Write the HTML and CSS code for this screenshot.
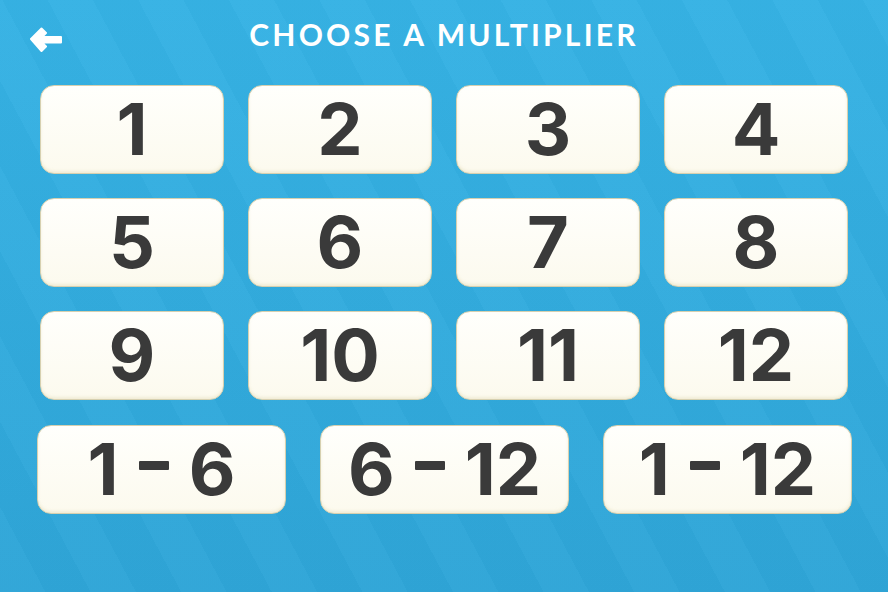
FILE: index.html
```html
<!DOCTYPE html>
<html lang="en">
<head>
    <meta charset="UTF-8">
    <meta name="viewport" content="width=device-width, initial-scale=1.0">
    <title>Choose a Multiplier</title>
    <link rel="stylesheet" href="styles.css">
</head>
<body>

<div class="screen">
    <div class="header">
        <button class="back" aria-label="Back">
            <svg width="34" height="26" viewBox="0 0 34 26">
                <path d="M2 13 L12.5 2.5 L17 7 L13 11 H32 V16.5 H13 L17 20.5 L12.5 25 Z" fill="#fff" stroke="#fff" stroke-width="2" stroke-linejoin="round"/>
            </svg>
        </button>
        <h1 class="title">CHOOSE A MULTIPLIER</h1>
    </div>

    <!-- single tables -->
    <div class="tables">
        <button class="card">1</button>
        <button class="card">2</button>
        <button class="card">3</button>
        <button class="card">4</button>
        <button class="card">5</button>
        <button class="card">6</button>
        <button class="card">7</button>
        <button class="card">8</button>
        <button class="card">9</button>
        <button class="card">10</button>
        <button class="card">11</button>
        <button class="card">12</button>
    </div>

    <!-- mixed ranges -->
    <div class="ranges">
        <button class="card">1<span class="dash" aria-label="to"></span>6</button>
        <button class="card">6<span class="dash" aria-label="to"></span>12</button>
        <button class="card">1<span class="dash" aria-label="to"></span>12</button>
    </div>
</div>

</body>
</html>
```

FILE: styles.css
```css
* {
    box-sizing: border-box;
}
html, body {
    margin: 0;
    height: 100%;
}
body {
    font-family: Inter, "Liberation Sans", sans-serif;
    background-color: #33ade0;
    background-image:
        repeating-linear-gradient(62deg, rgba(255, 255, 255, 0.02) 0 40px, rgba(0, 0, 0, 0.012) 40px 80px),
        linear-gradient(180deg, #36b2e4 0%, #2fa5d7 100%);
    overflow: hidden;
}
.screen {
    width: 888px;
    height: 592px;
}
.header {
    position: relative;
    height: 85px;
    display: flex;
    justify-content: center;
    padding-top: 14px;
}
.back {
    position: absolute;
    left: 29px;
    top: 26px;
    padding: 0;
    border: none;
    background: none;
    cursor: pointer;
}
.back svg {
    display: block;
}
.title {
    margin: 0;
    color: #fff;
    font-family: Lato, "Liberation Sans", sans-serif;
    font-weight: 700;
    font-size: 30px;
    letter-spacing: 3.2px;
    line-height: 40px;
}
.tables {
    display: grid;
    grid-template-columns: repeat(4, 184px);
    grid-auto-rows: 89px;
    gap: 24px;
    padding-left: 40px;
}
.ranges {
    display: grid;
    grid-template-columns: repeat(3, 249px);
    grid-auto-rows: 89px;
    gap: 34px;
    padding-left: 37px;
    margin-top: 25px;
}
.card {
    display: flex;
    align-items: center;
    justify-content: center;
    padding: 0 0 2px;
    border: 1px solid #d6d0b0;
    border-radius: 14px;
    background: linear-gradient(180deg, #fffffc 0%, #fcfaee 100%);
    box-shadow: inset 0 -2px 3px rgba(220, 212, 170, 0.35);
    color: #3a3a3a;
    font-family: inherit;
    font-weight: 700;
    font-size: 72px;
    line-height: 1;
    cursor: pointer;
}
.card .dash {
    display: inline-block;
    width: 30px;
    height: 9px;
    margin: 0 20px 6px;
    border-radius: 1px;
    background-color: #3a3a3a;
}
```
